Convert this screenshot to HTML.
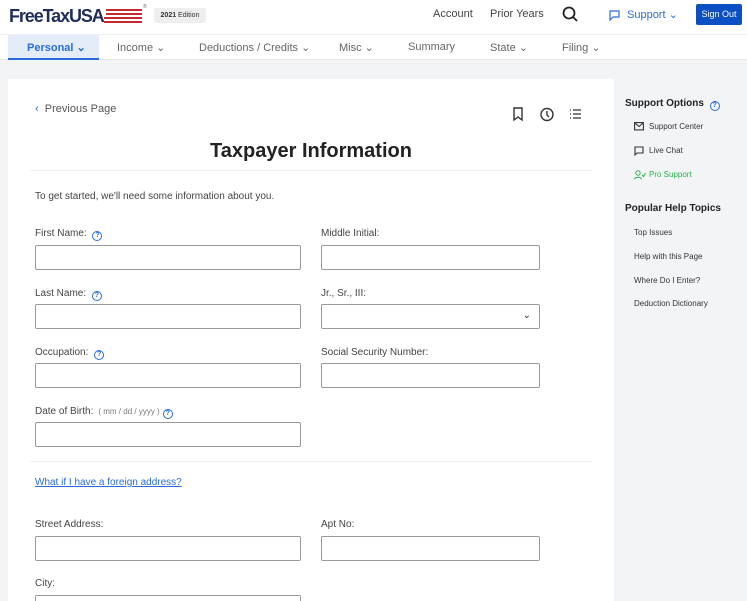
<!DOCTYPE html>
<html><head><style>
*{box-sizing:border-box;margin:0;padding:0}
html,body{width:747px;height:601px;overflow:hidden}
body{background:#f3f4f6;font-family:"Liberation Sans",sans-serif;position:relative;color:#333}
.a{position:absolute;white-space:nowrap}
.hdr{position:absolute;left:0;top:0;width:747px;height:34px;background:#fff}
.nav{position:absolute;left:0;top:34px;width:747px;height:26px;background:#fff;border-top:1px solid #eee;border-bottom:1px solid #e6e6e6}
.nav span{position:absolute;top:6px;font-size:11px;color:#666}
.card{position:absolute;left:8px;top:79px;width:606px;height:530px;background:#fff}
.lbl{position:absolute;font-size:10px;color:#444}
.in{position:absolute;height:25px;border:1px solid #999;border-radius:2px;background:#fff}
.q{display:inline-block;width:10px;height:10px;border:1px solid #2a6dd8;border-radius:50%;font-size:7px;line-height:8px;text-align:center;color:#2a6dd8;vertical-align:-1px;margin-left:3px;font-weight:bold}
.sb{position:absolute;font-size:8px;color:#333}
</style></head><body>
<div class="hdr">
<div class="a" style="left:9px;top:6px;font-size:18px;font-weight:bold;color:#1f2d5c;letter-spacing:-1.1px">FreeTaxUSA</div>
<div class="a" style="left:106px;top:9px;width:36px;height:2px;background:#c4272f"></div>
<div class="a" style="left:106px;top:13px;width:36px;height:2px;background:#c4272f"></div>
<div class="a" style="left:104px;top:17px;width:38px;height:2px;background:#c4272f"></div>
<div class="a" style="left:104px;top:21px;width:38px;height:2px;background:#c4272f"></div>
<div class="a" style="left:143px;top:4px;font-size:5px;color:#666">®</div>
<div class="a" style="left:154px;top:8px;width:52px;height:15px;background:#eee;border-radius:2px;font-size:7px;line-height:15px;text-align:center;color:#333"><b>2021</b> Edition</div>
<div class="a" style="left:433px;top:8px;font-size:11px;color:#444">Account</div>
<div class="a" style="left:490px;top:8px;font-size:11px;color:#444">Prior Years</div>
<svg class="a" style="left:561px;top:5px" width="18" height="18" viewBox="0 0 18 18"><circle cx="8" cy="8" r="5.5" fill="none" stroke="#222" stroke-width="1.8"/><path d="M12 12l4 4" stroke="#222" stroke-width="1.8"/></svg>
<svg class="a" style="left:609px;top:10px" width="11" height="11" viewBox="0 0 11 11"><path d="M1 1h9v6H4l-3 3z" fill="none" stroke="#2a6dd8" stroke-width="1.2"/></svg>
<div class="a" style="left:627px;top:8px;font-size:11px;color:#2a6dd8">Support ⌄</div>
<div class="a" style="left:696px;top:4px;width:46px;height:21px;background:#0b4fc2;border-radius:2px;color:#fff;font-size:9px;line-height:21px;text-align:center">Sign Out</div>
</div>
<div class="nav">
<div class="a" style="left:8px;top:0;width:91px;height:25px;background:#e4ecf8;border-bottom:2px solid #2a6dd8"></div>
<span style="left:27px;color:#2a6dd8;font-weight:bold">Personal ⌄</span>
<span style="left:117px">Income ⌄</span>
<span style="left:199px">Deductions / Credits ⌄</span>
<span style="left:339px">Misc ⌄</span>
<span style="left:408px">Summary</span>
<span style="left:490px">State ⌄</span>
<span style="left:562px">Filing ⌄</span>
</div>
<div class="card"></div>
<div class="a" style="left:35px;top:103px;font-size:11px;color:#555"><span style="color:#2a6dd8">‹</span>&nbsp; Previous Page</div>
<svg class="a" style="left:512px;top:107px" width="76" height="15" viewBox="0 0 76 15"><path d="M2 1h8v12l-4-3-4 3z" fill="none" stroke="#333" stroke-width="1.4"/><circle cx="35" cy="7.5" r="6" fill="none" stroke="#333" stroke-width="1.4"/><path d="M35 4v4l2 2" fill="none" stroke="#333" stroke-width="1.4"/><path d="M58 3h1M58 7h1M58 11h1M61 3h8M61 7h8M61 11h8" stroke="#333" stroke-width="1.3"/></svg>
<div class="a" style="left:0;width:622px;top:140px;text-align:center;font-size:20px;font-weight:bold;color:#222">Taxpayer Information</div>
<div class="a" style="left:30px;top:170px;width:563px;height:1px;background:#eee"></div>
<div class="a" style="left:35px;top:191px;font-size:10px;color:#444">To get started, we'll need some information about you.</div>
<div class="lbl" style="left:35px;top:228px">First Name: <span class="q">?</span></div>
<div class="lbl" style="left:321px;top:228px">Middle Initial:</div>
<div class="in" style="left:35px;top:245px;width:266px"></div>
<div class="in" style="left:321px;top:245px;width:219px"></div>
<div class="lbl" style="left:35px;top:288px">Last Name: <span class="q">?</span></div>
<div class="lbl" style="left:321px;top:288px">Jr., Sr., III:</div>
<div class="in" style="left:35px;top:304px;width:266px"></div>
<div class="in" style="left:321px;top:304px;width:219px"><span class="a" style="right:8px;top:5px;font-size:10px;color:#333">⌄</span></div>
<div class="lbl" style="left:35px;top:347px">Occupation: <span class="q">?</span></div>
<div class="lbl" style="left:321px;top:347px">Social Security Number:</div>
<div class="in" style="left:35px;top:363px;width:266px"></div>
<div class="in" style="left:321px;top:363px;width:219px"></div>
<div class="lbl" style="left:35px;top:406px">Date of Birth: <span style="font-size:8px;color:#777">&nbsp;( mm / dd / yyyy )</span><span class="q">?</span></div>
<div class="in" style="left:35px;top:422px;width:266px"></div>
<div class="a" style="left:30px;top:461px;width:563px;height:1px;background:#eee"></div>
<div class="a" style="left:35px;top:477px;font-size:10px;color:#2a6dd8;text-decoration:underline">What if I have a foreign address?</div>
<div class="lbl" style="left:35px;top:519px">Street Address:</div>
<div class="lbl" style="left:321px;top:519px">Apt No:</div>
<div class="in" style="left:35px;top:536px;width:266px"></div>
<div class="in" style="left:321px;top:536px;width:219px"></div>
<div class="lbl" style="left:35px;top:578px">City:</div>
<div class="in" style="left:35px;top:595px;width:266px"></div>
<div class="a" style="left:625px;top:98px;font-size:10px;font-weight:bold;color:#222">Support Options <span class="q">?</span></div>
<svg class="a" style="left:634px;top:122px" width="10" height="9" viewBox="0 0 10 9"><rect x="0.6" y="0.6" width="8.8" height="7.3" fill="none" stroke="#333" stroke-width="1.1"/><path d="M1 1l4 3.5L9 1" fill="none" stroke="#333" stroke-width="1.1"/></svg>
<div class="sb" style="left:649px;top:122px">Support Center</div>
<svg class="a" style="left:634px;top:146px" width="10" height="10" viewBox="0 0 10 10"><path d="M1 1h8v6H3l-2 2z" fill="none" stroke="#333" stroke-width="1.1"/></svg>
<div class="sb" style="left:649px;top:146px">Live Chat</div>
<svg class="a" style="left:634px;top:170px" width="12" height="10" viewBox="0 0 12 10"><circle cx="4" cy="3" r="2.2" fill="none" stroke="#2bb24c" stroke-width="1"/><path d="M0.5 9.5c0-3 7-3 7 0M8 5l1.5 1.5L11.5 3" fill="none" stroke="#2bb24c" stroke-width="1"/></svg>
<div class="sb" style="left:649px;top:170px;color:#2bb24c">Pro Support</div>
<div class="a" style="left:625px;top:203px;font-size:10px;font-weight:bold;color:#222">Popular Help Topics</div>
<div class="sb" style="left:634px;top:228px">Top Issues</div>
<div class="sb" style="left:634px;top:252px">Help with this Page</div>
<div class="sb" style="left:634px;top:276px">Where Do I Enter?</div>
<div class="sb" style="left:634px;top:299px">Deduction Dictionary</div>
</body></html>
